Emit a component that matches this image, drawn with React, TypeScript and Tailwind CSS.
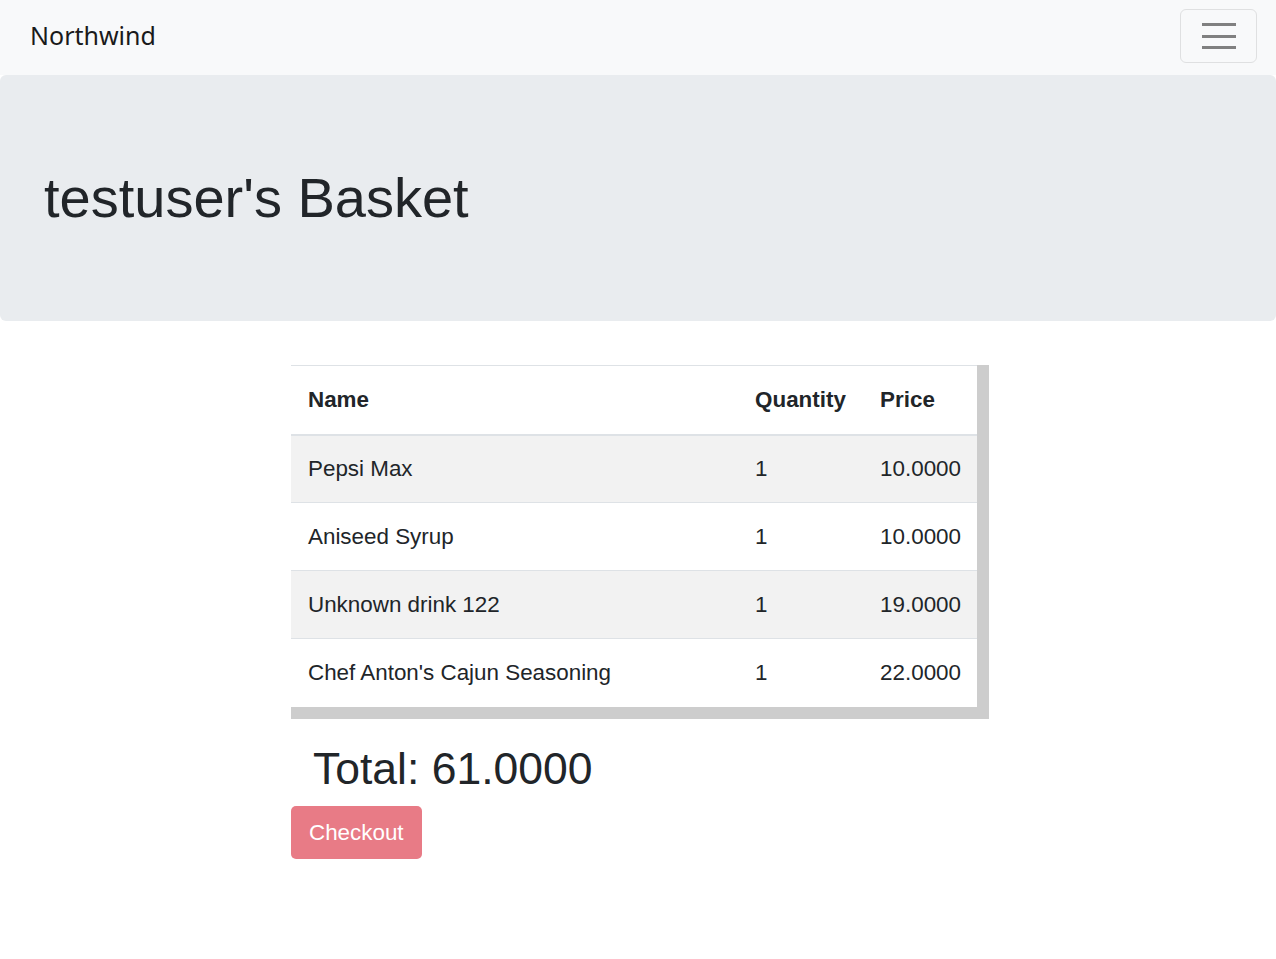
import React from 'react';

// basket rows
const ITEMS = [
  { name: 'Pepsi Max', quantity: 1, price: '10.0000' },
  { name: 'Aniseed Syrup', quantity: 1, price: '10.0000' },
  { name: 'Unknown drink 122', quantity: 1, price: '19.0000' },
  { name: "Chef Anton's Cajun Seasoning", quantity: 1, price: '22.0000' },
];

export default function App() {
  return (
    <div className="min-h-[959px] bg-white text-[#212529] font-['Liberation_Sans',Arial,sans-serif]">
      {/* navbar */}
      <nav className="flex h-[75px] items-center justify-between bg-[#f8f9fa] pb-[3px] pl-[30px] pr-[19px]">
        <span className="font-['Noto_Sans',sans-serif] text-[25px] text-[#1a1a1a]">Northwind</span>
        <button className="flex h-[54px] w-[77px] flex-col items-center justify-center gap-[8.5px] rounded-[6px] border border-[#dfe0e1]">
          <span className="block h-[3px] w-[34px] bg-[#808080]" />
          <span className="block h-[3px] w-[34px] bg-[#808080]" />
          <span className="block h-[3px] w-[34px] bg-[#808080]" />
        </button>
      </nav>

      {/* jumbotron */}
      <div className="flex h-[246px] items-center rounded-[6px] bg-[#e9ecef] pl-[44px]">
        <h1 className="text-[56px] leading-[1.2] font-light">testuser's Basket</h1>
      </div>

      {/* basket */}
      <div className="pl-[291px] pt-[44px]">
        <div className="w-[698px] border-r-[12px] border-b-[12px] border-[#cdcdcd] bg-white">
          <table className="w-full border-collapse text-[22.4px]">
            <thead>
              <tr className="h-[69px] border-t border-b-2 border-[#dee2e6] text-left">
                <th className="px-[17px] font-bold">Name</th>
                <th className="w-[125px] pl-[18px] pr-[16px] font-bold">Quantity</th>
                <th className="w-[114px] pl-[18px] pr-[16px] font-bold">Price</th>
              </tr>
            </thead>
            <tbody>
              {ITEMS.map((item, i) => (
                <tr
                  key={item.name}
                  className={`h-[68px] ${i > 0 ? 'border-t border-[#dee2e6]' : ''} ${i % 2 === 0 ? 'bg-[#f2f2f2]' : 'bg-white'}`}
                >
                  <td className="px-[17px]">{item.name}</td>
                  <td className="pl-[18px] pr-[16px]">{item.quantity}</td>
                  <td className="pl-[18px] pr-[16px]">{item.price}</td>
                </tr>
              ))}
            </tbody>
          </table>
        </div>

        <h2 className="mt-[23px] mb-[11px] pl-[22px] text-[44.5px] leading-[1.2]">Total: 61.0000</h2>
        <button className="h-[53px] rounded-[5px] bg-[#e87b86] px-[18px] text-[22.4px] text-white">Checkout</button>
      </div>
    </div>
  );
}
